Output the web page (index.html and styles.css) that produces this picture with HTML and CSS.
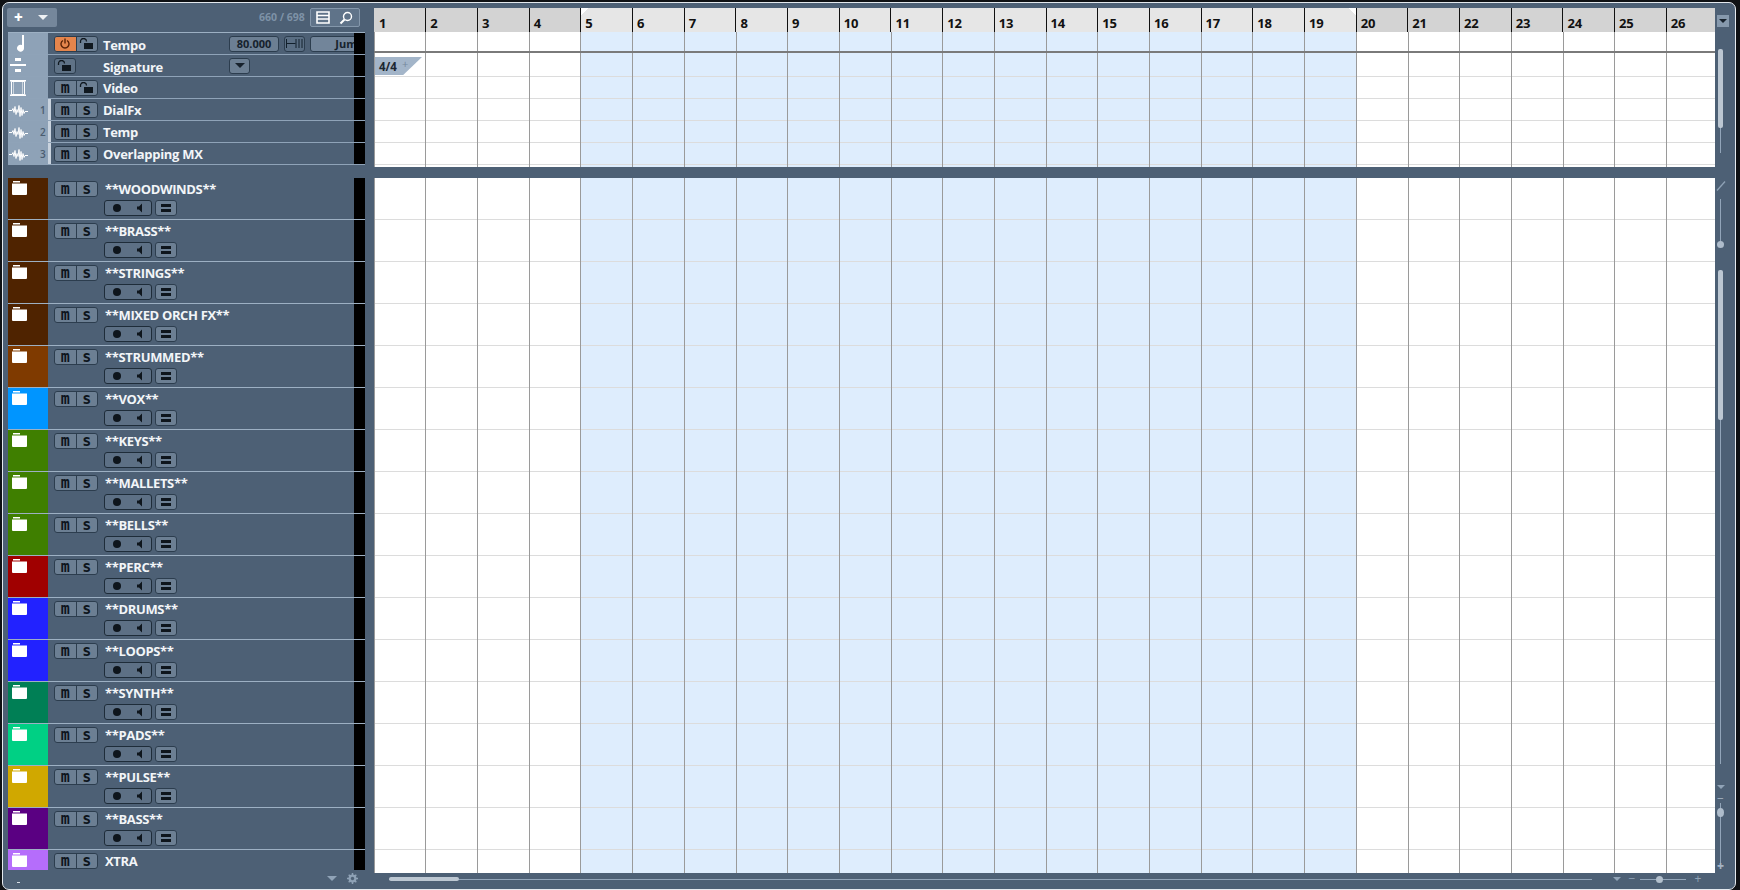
FILE: index.html
```html
<!DOCTYPE html>
<html lang="en">
<head>
<meta charset="utf-8">
<title>Project</title>
<link rel="stylesheet" href="styles.css">
</head>
<body>
<svg class="defs" width="0" height="0">
  <symbol id="folder" viewBox="0 0 15 14"><path d="M1 0h7v1.500H1zM0 2.500h15V13a1 1 0 0 1-1 1H1a1 1 0 0 1-1-1z" fill="#fff"/></symbol>
  <symbol id="wave" viewBox="0 0 20 14"><path d="M0 7.500h3l1-2 1 4 1-6 1 8 1-5 1 3 1-7 1 11 1-9 1 8 1-6 1 4 1-2h3" stroke="#fff" stroke-width="1" fill="none"/></symbol>
  <symbol id="lock" viewBox="0 0 16 12"><path d="M1.500 5V3.500a3 3 0 0 1 6 0" stroke="#10181f" stroke-width="1.300" fill="none"/><rect x="5" y="5" width="9" height="6" fill="#10181f"/></symbol>
  <symbol id="rec" viewBox="0 0 10 10"><circle cx="5" cy="5" r="4" fill="#0e151c"/></symbol>
  <symbol id="spk" viewBox="0 0 10 10"><path d="M3 3.500h2L8 .5v9L5 6.500H3z" fill="#0e151c"/></symbol>
  <symbol id="eq" viewBox="0 0 10 8"><path d="M0 0h10v3H0zM0 5h10v3H0z" fill="#0e151c"/></symbol>
</svg>
<div class="window">
  <div class="main">
    <div class="tracks">
      <div class="head">
        <div class="addbtn"><span class="plus">+</span><span class="tri"></span></div>
        <span class="count">660 / 698</span>
        <div class="viewbtn">
          <svg width="14" height="13" viewBox="0 0 14 13"><path d="M1 1h12v11H1zM1 4.500h12M1 8h12" stroke="#fff" stroke-width="1.600" fill="none"/></svg>
          <svg width="14" height="14" viewBox="0 0 14 14"><circle cx="8.500" cy="5.500" r="4" stroke="#fff" stroke-width="1.400" fill="none"/><path d="M5.500 8.500L1.500 12.500" stroke="#fff" stroke-width="2" fill="none"/></svg>
        </div>
      </div>
      <div class="global">
        <div class="grow">
          <div class="gicon"><svg width="10" height="17" viewBox="0 0 10 17"><path d="M7 0h2v13a3.500 3.500 0 1 1-2-3z" fill="#fff"/></svg></div>
          <div class="gbtns"><div class="btns"><span class="btn on"><svg width="10" height="11" viewBox="0 0 10 11"><path d="M3 2.500a4 4 0 1 0 4 0M5 0.500v5" stroke="#5a2408" stroke-width="1.400" fill="none"/></svg></span><span class="btn"><svg class="ilock"><use href="#lock"/></svg></span></div></div>
          <span class="name">Tempo</span>
          <div class="params"><span class="pbtn val">80.000</span><span class="pbtn ruler"><svg width="17" height="9" viewBox="0 0 17 9"><path d="M.5 0v9M.5 4.500h9M10 0v9M13 0v9M16 0v9" stroke="#12202c" fill="none"/></svg></span><span class="pbtn jump">Jump</span></div>
          <div class="black"></div>
        </div>
        <div class="grow">
          <div class="gicon"><svg width="16" height="15" viewBox="0 0 16 15"><path d="M5 0h6v3H5zM0 6h16v2H0zM5 11h6v3H5z" fill="#fff"/></svg></div>
          <div class="gbtns"><div class="btns single"><span class="btn"><svg class="ilock"><use href="#lock"/></svg></span></div></div>
          <span class="name">Signature</span>
          <div class="params"><span class="pbtn drop"><span class="tri dark"></span></span></div>
          <div class="black"></div>
        </div>
        <div class="grow">
          <div class="gicon"><svg width="16" height="16" viewBox="0 0 16 16"><path d="M1.500 1.500h13v13h-13z" stroke="#fff" fill="none"/><path d="M0 0h16v1.500H0zM0 14.500h16V16H0z" fill="#fff"/><path d="M3.500 2v12M12.500 2v12" stroke="#fff" stroke-opacity=".55" fill="none"/></svg></div>
          <div class="gbtns"><div class="btns"><span class="btn">m</span><span class="btn"><svg class="ilock"><use href="#lock"/></svg></span></div></div>
          <span class="name">Video</span>
          <div class="black"></div>
        </div>
        <div class="grow audio">
          <div class="gicon"><svg class="iwave"><use href="#wave"/></svg><span class="num">1</span></div>
          <div class="gbtns"><div class="btns"><span class="btn">m</span><span class="btn">s</span></div></div>
          <span class="name">DialFx</span>
          <div class="black"></div>
        </div>
        <div class="grow audio">
          <div class="gicon"><svg class="iwave"><use href="#wave"/></svg><span class="num">2</span></div>
          <div class="gbtns"><div class="btns"><span class="btn">m</span><span class="btn">s</span></div></div>
          <span class="name">Temp</span>
          <div class="black"></div>
        </div>
        <div class="grow audio">
          <div class="gicon"><svg class="iwave"><use href="#wave"/></svg><span class="num">3</span></div>
          <div class="gbtns"><div class="btns"><span class="btn">m</span><span class="btn">s</span></div></div>
          <span class="name">Overlapping MX</span>
          <div class="black"></div>
        </div>
      </div>
      <div class="folders">
        <div class="frow"><div class="swatch c-brown"><svg class="ifolder"><use href="#folder"/></svg></div><div class="fbody"><div class="l1"><div class="btns"><span class="btn">m</span><span class="btn">s</span></div><span class="fname">**WOODWINDS**</span></div><div class="l2"><div class="btns b2"><span class="btn w"><svg class="irec"><use href="#rec"/></svg><svg class="irec"><use href="#spk"/></svg></span></div><div class="btns b3"><span class="btn"><svg class="ieq"><use href="#eq"/></svg></span></div></div></div><div class="black"></div></div>
        <div class="frow"><div class="swatch c-brown"><svg class="ifolder"><use href="#folder"/></svg></div><div class="fbody"><div class="l1"><div class="btns"><span class="btn">m</span><span class="btn">s</span></div><span class="fname">**BRASS**</span></div><div class="l2"><div class="btns b2"><span class="btn w"><svg class="irec"><use href="#rec"/></svg><svg class="irec"><use href="#spk"/></svg></span></div><div class="btns b3"><span class="btn"><svg class="ieq"><use href="#eq"/></svg></span></div></div></div><div class="black"></div></div>
        <div class="frow"><div class="swatch c-brown"><svg class="ifolder"><use href="#folder"/></svg></div><div class="fbody"><div class="l1"><div class="btns"><span class="btn">m</span><span class="btn">s</span></div><span class="fname">**STRINGS**</span></div><div class="l2"><div class="btns b2"><span class="btn w"><svg class="irec"><use href="#rec"/></svg><svg class="irec"><use href="#spk"/></svg></span></div><div class="btns b3"><span class="btn"><svg class="ieq"><use href="#eq"/></svg></span></div></div></div><div class="black"></div></div>
        <div class="frow"><div class="swatch c-brown"><svg class="ifolder"><use href="#folder"/></svg></div><div class="fbody"><div class="l1"><div class="btns"><span class="btn">m</span><span class="btn">s</span></div><span class="fname">**MIXED ORCH FX**</span></div><div class="l2"><div class="btns b2"><span class="btn w"><svg class="irec"><use href="#rec"/></svg><svg class="irec"><use href="#spk"/></svg></span></div><div class="btns b3"><span class="btn"><svg class="ieq"><use href="#eq"/></svg></span></div></div></div><div class="black"></div></div>
        <div class="frow"><div class="swatch c-rust"><svg class="ifolder"><use href="#folder"/></svg></div><div class="fbody"><div class="l1"><div class="btns"><span class="btn">m</span><span class="btn">s</span></div><span class="fname">**STRUMMED**</span></div><div class="l2"><div class="btns b2"><span class="btn w"><svg class="irec"><use href="#rec"/></svg><svg class="irec"><use href="#spk"/></svg></span></div><div class="btns b3"><span class="btn"><svg class="ieq"><use href="#eq"/></svg></span></div></div></div><div class="black"></div></div>
        <div class="frow"><div class="swatch c-sky"><svg class="ifolder"><use href="#folder"/></svg></div><div class="fbody"><div class="l1"><div class="btns"><span class="btn">m</span><span class="btn">s</span></div><span class="fname">**VOX**</span></div><div class="l2"><div class="btns b2"><span class="btn w"><svg class="irec"><use href="#rec"/></svg><svg class="irec"><use href="#spk"/></svg></span></div><div class="btns b3"><span class="btn"><svg class="ieq"><use href="#eq"/></svg></span></div></div></div><div class="black"></div></div>
        <div class="frow"><div class="swatch c-green"><svg class="ifolder"><use href="#folder"/></svg></div><div class="fbody"><div class="l1"><div class="btns"><span class="btn">m</span><span class="btn">s</span></div><span class="fname">**KEYS**</span></div><div class="l2"><div class="btns b2"><span class="btn w"><svg class="irec"><use href="#rec"/></svg><svg class="irec"><use href="#spk"/></svg></span></div><div class="btns b3"><span class="btn"><svg class="ieq"><use href="#eq"/></svg></span></div></div></div><div class="black"></div></div>
        <div class="frow"><div class="swatch c-green"><svg class="ifolder"><use href="#folder"/></svg></div><div class="fbody"><div class="l1"><div class="btns"><span class="btn">m</span><span class="btn">s</span></div><span class="fname">**MALLETS**</span></div><div class="l2"><div class="btns b2"><span class="btn w"><svg class="irec"><use href="#rec"/></svg><svg class="irec"><use href="#spk"/></svg></span></div><div class="btns b3"><span class="btn"><svg class="ieq"><use href="#eq"/></svg></span></div></div></div><div class="black"></div></div>
        <div class="frow"><div class="swatch c-green"><svg class="ifolder"><use href="#folder"/></svg></div><div class="fbody"><div class="l1"><div class="btns"><span class="btn">m</span><span class="btn">s</span></div><span class="fname">**BELLS**</span></div><div class="l2"><div class="btns b2"><span class="btn w"><svg class="irec"><use href="#rec"/></svg><svg class="irec"><use href="#spk"/></svg></span></div><div class="btns b3"><span class="btn"><svg class="ieq"><use href="#eq"/></svg></span></div></div></div><div class="black"></div></div>
        <div class="frow"><div class="swatch c-red"><svg class="ifolder"><use href="#folder"/></svg></div><div class="fbody"><div class="l1"><div class="btns"><span class="btn">m</span><span class="btn">s</span></div><span class="fname">**PERC**</span></div><div class="l2"><div class="btns b2"><span class="btn w"><svg class="irec"><use href="#rec"/></svg><svg class="irec"><use href="#spk"/></svg></span></div><div class="btns b3"><span class="btn"><svg class="ieq"><use href="#eq"/></svg></span></div></div></div><div class="black"></div></div>
        <div class="frow"><div class="swatch c-blue"><svg class="ifolder"><use href="#folder"/></svg></div><div class="fbody"><div class="l1"><div class="btns"><span class="btn">m</span><span class="btn">s</span></div><span class="fname">**DRUMS**</span></div><div class="l2"><div class="btns b2"><span class="btn w"><svg class="irec"><use href="#rec"/></svg><svg class="irec"><use href="#spk"/></svg></span></div><div class="btns b3"><span class="btn"><svg class="ieq"><use href="#eq"/></svg></span></div></div></div><div class="black"></div></div>
        <div class="frow"><div class="swatch c-blue"><svg class="ifolder"><use href="#folder"/></svg></div><div class="fbody"><div class="l1"><div class="btns"><span class="btn">m</span><span class="btn">s</span></div><span class="fname">**LOOPS**</span></div><div class="l2"><div class="btns b2"><span class="btn w"><svg class="irec"><use href="#rec"/></svg><svg class="irec"><use href="#spk"/></svg></span></div><div class="btns b3"><span class="btn"><svg class="ieq"><use href="#eq"/></svg></span></div></div></div><div class="black"></div></div>
        <div class="frow"><div class="swatch c-teal"><svg class="ifolder"><use href="#folder"/></svg></div><div class="fbody"><div class="l1"><div class="btns"><span class="btn">m</span><span class="btn">s</span></div><span class="fname">**SYNTH**</span></div><div class="l2"><div class="btns b2"><span class="btn w"><svg class="irec"><use href="#rec"/></svg><svg class="irec"><use href="#spk"/></svg></span></div><div class="btns b3"><span class="btn"><svg class="ieq"><use href="#eq"/></svg></span></div></div></div><div class="black"></div></div>
        <div class="frow"><div class="swatch c-mint"><svg class="ifolder"><use href="#folder"/></svg></div><div class="fbody"><div class="l1"><div class="btns"><span class="btn">m</span><span class="btn">s</span></div><span class="fname">**PADS**</span></div><div class="l2"><div class="btns b2"><span class="btn w"><svg class="irec"><use href="#rec"/></svg><svg class="irec"><use href="#spk"/></svg></span></div><div class="btns b3"><span class="btn"><svg class="ieq"><use href="#eq"/></svg></span></div></div></div><div class="black"></div></div>
        <div class="frow"><div class="swatch c-gold"><svg class="ifolder"><use href="#folder"/></svg></div><div class="fbody"><div class="l1"><div class="btns"><span class="btn">m</span><span class="btn">s</span></div><span class="fname">**PULSE**</span></div><div class="l2"><div class="btns b2"><span class="btn w"><svg class="irec"><use href="#rec"/></svg><svg class="irec"><use href="#spk"/></svg></span></div><div class="btns b3"><span class="btn"><svg class="ieq"><use href="#eq"/></svg></span></div></div></div><div class="black"></div></div>
        <div class="frow"><div class="swatch c-purple"><svg class="ifolder"><use href="#folder"/></svg></div><div class="fbody"><div class="l1"><div class="btns"><span class="btn">m</span><span class="btn">s</span></div><span class="fname">**BASS**</span></div><div class="l2"><div class="btns b2"><span class="btn w"><svg class="irec"><use href="#rec"/></svg><svg class="irec"><use href="#spk"/></svg></span></div><div class="btns b3"><span class="btn"><svg class="ieq"><use href="#eq"/></svg></span></div></div></div><div class="black"></div></div>
        <div class="frow last"><div class="swatch c-lilac"><svg class="ifolder"><use href="#folder"/></svg></div><div class="fbody"><div class="l1"><div class="btns"><span class="btn">m</span><span class="btn">s</span></div><span class="fname">XTRA</span></div></div><div class="black"></div></div>
      </div>
      <div class="tfoot">
        <span class="dash"></span>
        <span class="tri small"></span>
        <svg class="gear" width="11" height="11" viewBox="0 0 13 13"><circle cx="6.500" cy="6.500" r="3.500" stroke="#8fa2b6" stroke-width="2.400" fill="none"/><path d="M6.500 0v13M0 6.500h13M2 2l9 9M11 2l-9 9" stroke="#8fa2b6" stroke-width="1.800"/><circle cx="6.500" cy="6.500" r="2" fill="#4d6075"/></svg>
      </div>
    </div>
    <div class="arr">
      <div class="ruler-bar">
        <span class="bar first">1</span><span class="bar">2</span><span class="bar">3</span><span class="bar">4</span><span class="bar">5</span><span class="bar">6</span><span class="bar">7</span><span class="bar">8</span><span class="bar">9</span><span class="bar">10</span><span class="bar">11</span><span class="bar">12</span><span class="bar">13</span><span class="bar">14</span><span class="bar">15</span><span class="bar">16</span><span class="bar">17</span><span class="bar">18</span><span class="bar">19</span><span class="bar">20</span><span class="bar">21</span><span class="bar">22</span><span class="bar">23</span><span class="bar">24</span><span class="bar">25</span><span class="bar">26</span>
      </div>
      <div class="lane tempo-lane"></div>
      <div class="sep"></div>
      <div class="lane upper"><div class="sig"><span>4/4</span><i>+</i></div></div>
      <div class="split"></div>
      <div class="lane lower"></div>
      <div class="hfoot">
        <div class="hscroll"><span class="hthumb"></span></div>
        <span class="tri small"></span>
        <span class="pm">−</span>
        <div class="hzoom"><span class="knob"></span></div>
        <span class="pm">+</span>
      </div>
    </div>
    <div class="vstrip">
      <div class="vbtn"><span class="tri dark"></span></div>
      <div class="vtrack t1"><span class="vthumb"></span></div>
      <svg class="slash" width="10" height="10" viewBox="0 0 10 10"><path d="M1 9.500L9 .5" stroke="#8fa2b6" stroke-width="1.300"/></svg>
      <div class="vtrack t2"><span class="vknob"></span></div>
      <div class="vtrack t3"><span class="vthumb"></span></div>
      <span class="tri small down"></span>
      <span class="vpm">−</span>
      <div class="vtrack t4"><span class="vknob top"></span></div>
      <span class="vpm plus">+</span>
    </div>
  </div>
</div>
</body>
</html>
```
FILE: styles.css
```css
* { box-sizing: border-box; }
html, body { margin: 0; height: 100%; }
body { background: #0f1114; overflow: hidden; font-family: "Open Sans", "Liberation Sans", sans-serif; }
.defs { position: absolute; }
.window {
  margin: 2px 4px 0 2px;
  height: 888px;
  background: #4d6075;
  border: 1px solid #e4e9ee;
  border-radius: 7px;
  padding: 5px 0 0 4px;
}
.main { display: flex; height: 100%; }

/* left track list */
.tracks { width: 358px; flex: none; display: flex; flex-direction: column; color: #f2f5f8; }
.head { height: 24px; display: flex; align-items: flex-start; flex: none; }
.addbtn { width: 50px; height: 19px; background: #75879b; border-radius: 2px; display: flex; align-items: center; padding-left: 7px; gap: 15px; }
.plus { color: #fff; font-weight: 800; font-size: 15px; line-height: 19px; }
.tri { width: 0; height: 0; border-left: 5px solid transparent; border-right: 5px solid transparent; border-top: 5px solid #eef1f4; display: block; }
.tri.dark { border-top-color: #17222d; }
.tri.small { border-top-color: #90a3b7; border-top-width: 4px; border-left-width: 4px; border-right-width: 4px; }
.count { margin-left: 202px; width: 51px; font-size: 10.500px; font-weight: 700; color: #7e92a7; line-height: 19px; white-space: nowrap; }
.viewbtn { width: 50px; height: 19px; background: #5f7389; border: 1px solid #8497ab; border-radius: 2px; display: flex; align-items: center; justify-content: space-between; padding: 0 6px 0 5px; }

.global { margin-left: 1px; border-top: 1px solid #9db0c3; flex: none; }
.grow { height: 22px; display: flex; align-items: center; border-bottom: 1px solid #8fa3b8; background: #4d6075; }
.gicon { width: 40px; height: 100%; flex: none; background: #8ea2b7; display: flex; align-items: center; padding-left: 7px; position: relative; }
.grow:nth-child(2) .gicon, .grow:nth-child(3) .gicon { padding-left: 2px; }
.grow:nth-child(-n+2) .name { padding-top: 2px; }
.audio .gicon { width: 43px; padding-left: 1px; box-shadow: inset -3px 0 0 #c9d3de; }
.audio .gbtns { width: 52px; padding-left: 3px; }
.iwave { width: 20px; height: 14px; }
.num { position: absolute; left: 32px; font-size: 10px; font-weight: 600; color: #4a5c70; line-height: 14px; }
.gbtns { width: 55px; flex: none; padding-left: 6px; }
.name { width: 126px; flex: none; font-size: 13px; letter-spacing: -.3px; font-weight: 700; white-space: nowrap; line-height: 20px; }
.params { display: flex; gap: 5px; flex: none; width: 125px; overflow: hidden; }
.pbtn { height: 16px; background: #6c7f93; border: 1px solid #2c3d4e; border-radius: 3px; font-size: 11px; font-weight: 700; color: #16222d; line-height: 14px; text-align: center; display: flex; align-items: center; justify-content: center; flex: none; }
.val { width: 50px; }
.ruler { width: 21px; background: #5a6e83; }
.jump { width: 60px; justify-content: flex-end; padding-right: 5px; background: #72859a; }
.drop { width: 21px; }
.black { width: 11px; height: 100%; background: #000; margin-left: auto; flex: none; }

.btns { display: flex; border: 1px solid #2c3d4e; border-radius: 3px; height: 16px; width: 44px; background: #6c7f93; flex: none; }
.btns.single { width: 22px; background: #5f7286; }
.btn { flex: 1; display: flex; align-items: center; justify-content: center; font-family: "DejaVu Sans Mono", monospace; font-size: 15px; font-weight: 700; color: #0e151c; line-height: 14px; min-width: 0; }
.btn + .btn { border-left: 1px solid #2c3d4e; }
.btn.on { background: #e5854c; border-radius: 2px 0 0 2px; }
.ilock { width: 16px; height: 12px; }

.folders { margin-left: 1px; margin-top: 13px; flex: none; }
.frow { height: 42px; display: flex; border-bottom: 1px solid #9db0c3; }
.frow.last { height: 20px; border-bottom: 0; }
.swatch { width: 40px; flex: none; padding: 3px 0 0 4px; }
.ifolder { width: 15px; height: 14px; display: block; }
.fbody { flex: 1; padding: 2px 0 0 6px; }
.l1 { display: flex; align-items: center; gap: 7px; height: 17px; }
.fname { font-size: 13px; letter-spacing: -.35px; font-weight: 700; line-height: 17px; white-space: nowrap; padding-top: 2px; }
.l2 { display: flex; gap: 3px; margin: 3px 0 0 50px; }
.b2 { width: 48px; background: #5d7085; border-color: #1e2c39; border-width: 1.500px; }
.b3 { width: 22px; }
.btn.w { justify-content: space-between; padding: 0 7px 0 7px; }
.irec { width: 10px; height: 10px; }
.ieq { width: 10px; height: 8px; }
.c-brown { background: #4f2300; }
.c-rust { background: #7f3a00; }
.c-sky { background: #0095ff; }
.c-green { background: #3f7f00; }
.c-red { background: #a00000; }
.c-blue { background: #2222ff; }
.c-teal { background: #007f55; }
.c-mint { background: #00d084; }
.c-gold { background: #d0a800; }
.c-purple { background: #5a0082; }
.c-lilac { background: #b56dfb; }

.tfoot { flex: 1; display: flex; align-items: center; padding: 0 7px 2px 10px; }
.dash { width: 3px; height: 1px; background: #d7dee5; margin-top: 8px; }
.tfoot .tri { margin-left: auto; margin-right: 10px; border-top-width: 5px; border-left-width: 5px; border-right-width: 5px; }

/* arranger */
.arr { width: 1341px; margin-left: 9px; flex: none; display: flex; flex-direction: column; }
.ruler-bar {
  height: 24px; flex: none; display: flex;
  background:
    linear-gradient(135deg, #fff 0 6px, transparent 6px) 206px 0 / 8px 8px no-repeat,
    linear-gradient(225deg, #fff 0 6px, transparent 6px) 975px 0 / 8px 8px no-repeat,
    linear-gradient(90deg, transparent 206px, #e6e6e6 206px 983px, transparent 983px),
    #d3d3d3;
}
.bar { flex: 0 0 51.700px; border-right: 1px solid #111; font-size: 13px; font-weight: 700; letter-spacing: -.2px; color: #111; padding: 6px 0 0 4px; line-height: 18px; }
.bar.first { flex-basis: 52.300px; padding-left: 5px; }
.bar:last-child { border-right: 0; }
.lane {
  position: relative; flex: none;
  --v: repeating-linear-gradient(90deg, transparent .6px, transparent 51.300px, #9a9a9a 51.300px, #9a9a9a 52.300px);
  --l: linear-gradient(90deg, transparent 206px, #deedfd 206px 983px, transparent 983px);
}
.tempo-lane { height: 19px; background: var(--v), var(--l), #fff; }
.sep { height: 2px; flex: none; background: #7a7a7a; }
.upper {
  height: 114px;
  background:
    var(--v),
    repeating-linear-gradient(transparent 0 21px, #dcdcdc 21px 22px) 0 2px / 100% 112px no-repeat,
    var(--l), #fff;
}
.split { height: 11px; flex: none; background: #4d6075; }
.lower {
  height: 695px;
  background:
    var(--v),
    repeating-linear-gradient(transparent 0 41px, #dcdcdc 41px 42px),
    var(--l), #fff;
}
.sig { position: absolute; left: 1px; top: 4px; width: 47px; height: 18px; background: #a3b5c9; clip-path: polygon(0 0, 100% 0, 60% 100%, 0 100%); display: flex; align-items: center; gap: 5px; padding-left: 4px; font-size: 11.500px; font-weight: 700; color: #1c2732; }
.sig i { font-style: normal; font-size: 11px; line-height: 12px; color: #75899e; margin-top: -5px; font-weight: 400; }
.hfoot { flex: 1; display: flex; align-items: center; padding: 0 0 6px 15px; color: #8fa2b6; }
.hscroll { width: 1203px; height: 1px; background: #92a5b9; position: relative; }
.hthumb { position: absolute; left: 0; top: -2px; width: 70px; height: 4px; background: #bcc7d2; border-radius: 2px; }
.hfoot .tri { margin-left: 21px; }
.pm { font-size: 12px; line-height: 12px; width: 10px; text-align: center; margin-left: 6px; }
.hzoom { width: 46px; height: 1px; background: #92a5b9; position: relative; margin-left: 3px; }
.knob { position: absolute; left: 16px; top: -3px; width: 7px; height: 7px; border-radius: 50%; background: #b3c0cd; }
.hzoom + .pm { margin-left: 7px; }

/* right strip */
.vstrip { width: 20px; flex: none; display: flex; flex-direction: column; align-items: center; padding-right: 9px; }
.vbtn { width: 12px; height: 12px; margin: 7px 0 0 2px; align-self: flex-start; background: #8699ad; display: flex; align-items: center; justify-content: center; flex: none; }
.vbtn .tri { border-top-width: 4px; border-left-width: 4px; border-right-width: 4px; }
.vtrack { width: 1px; background: #92a5b9; position: relative; flex: none; }
.vthumb { position: absolute; left: -2px; top: 0; width: 5px; background: #bcc7d2; border-radius: 2px; }
.t1 { height: 104px; margin-top: 22px; }
.t1 .vthumb { height: 79px; }
.slash { margin-top: 28px; flex: none; }
.t2 { height: 46px; margin-top: 8px; }
.vknob { position: absolute; left: -3px; bottom: -3px; width: 7px; height: 7px; border-radius: 50%; background: #aebccb; }
.vknob.top { top: 5px; bottom: auto; height: 9px; }
.t3 { height: 494px; margin-top: 25px; }
.t3 .vthumb { height: 150px; }
.vstrip .down { margin-top: 21px; flex: none; }
.vpm { font-size: 12px; line-height: 12px; height: 12px; color: #a4b4c4; margin-top: 4px; flex: none; }
.t4 { height: 60px; margin-top: -2px; }
.vpm.plus { margin-top: -3px; }
```
